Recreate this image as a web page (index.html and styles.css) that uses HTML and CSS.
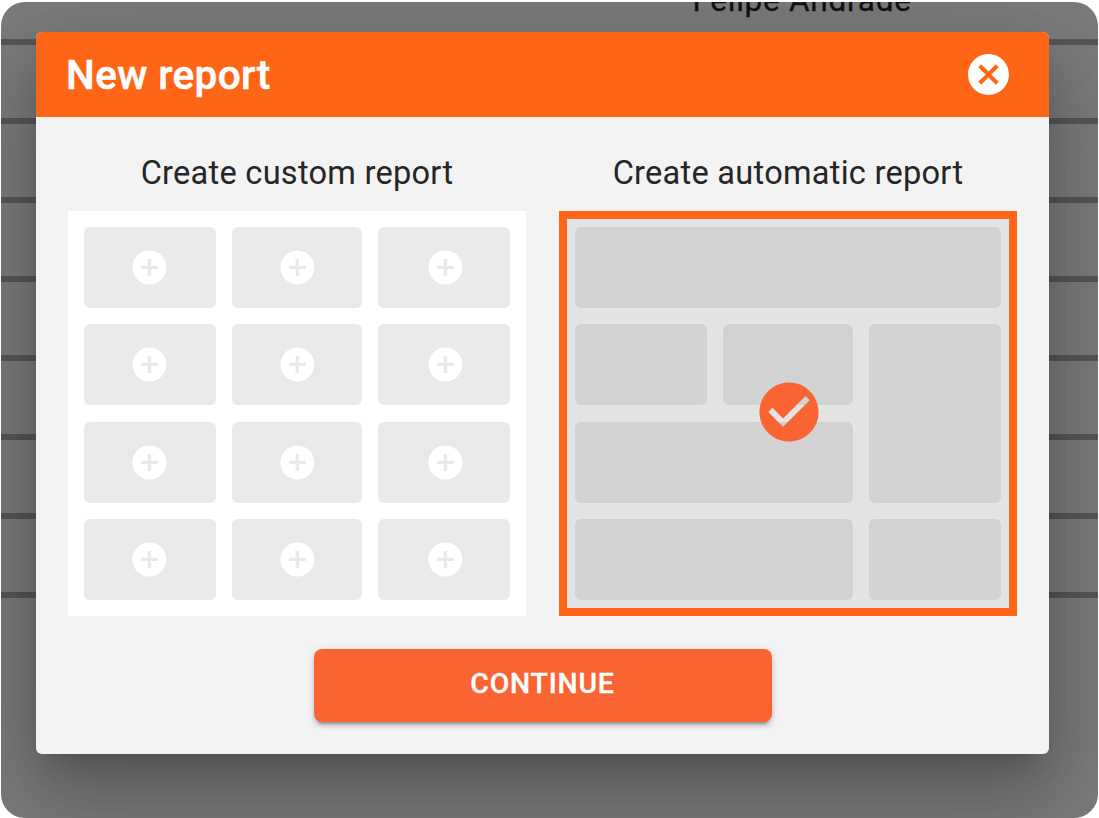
FILE: index.html
```html
<!DOCTYPE html>
<html lang="en">
<head>
<meta charset="utf-8">
<title>New report</title>
<link rel="stylesheet" href="styles.css">
</head>
<body>
<svg width="0" height="0" class="defs" aria-hidden="true">
  <symbol id="add" viewBox="0 0 24 24"><path d="M12 2C6.48 2 2 6.48 2 12s4.48 10 10 10 10-4.48 10-10S17.52 2 12 2zm5 11h-4v4h-2v-4H7v-2h4V7h2v4h4v2z"/></symbol>
</svg>
<div class="stage">
  <div class="backdrop-list">
    <div class="list-row list-row-first"><span class="person">Felipe Andrade</span></div>
    <div class="list-row"></div>
    <div class="list-row"></div>
    <div class="list-row"></div>
    <div class="list-row"></div>
    <div class="list-row"></div>
    <div class="list-row"></div>
    <div class="list-row"></div>
  </div>
  <section class="dialog" role="dialog" aria-labelledby="title">
    <header class="dialog-header">
      <h1 class="dialog-title" id="title">New report</h1>
      <button class="close" aria-label="Close"><svg class="close-icon" viewBox="0 0 24 24"><path d="M12 2C6.47 2 2 6.47 2 12s4.47 10 10 10 10-4.47 10-10S17.53 2 12 2zm5 13.59L15.59 17 12 13.41 8.41 17 7 15.59 10.59 12 7 8.41 8.41 7 12 10.59 15.59 7 17 8.41 13.41 12 17 15.59z"/></svg></button>
    </header>
    <div class="dialog-body">
      <div class="options">
        <div class="option">
          <h2 class="option-title">Create custom report</h2>
          <div class="preview preview-custom">
            <div class="cell cell-start"><svg class="add-icon"><use href="#add"/></svg></div>
            <div class="cell"><svg class="add-icon"><use href="#add"/></svg></div>
            <div class="cell cell-end"><svg class="add-icon"><use href="#add"/></svg></div>
            <div class="cell cell-start"><svg class="add-icon"><use href="#add"/></svg></div>
            <div class="cell"><svg class="add-icon"><use href="#add"/></svg></div>
            <div class="cell cell-end"><svg class="add-icon"><use href="#add"/></svg></div>
            <div class="cell cell-start"><svg class="add-icon"><use href="#add"/></svg></div>
            <div class="cell"><svg class="add-icon"><use href="#add"/></svg></div>
            <div class="cell cell-end"><svg class="add-icon"><use href="#add"/></svg></div>
            <div class="cell cell-start"><svg class="add-icon"><use href="#add"/></svg></div>
            <div class="cell"><svg class="add-icon"><use href="#add"/></svg></div>
            <div class="cell cell-end"><svg class="add-icon"><use href="#add"/></svg></div>
          </div>
        </div>
        <div class="option">
          <h2 class="option-title">Create automatic report</h2>
          <div class="preview preview-auto">
            <div class="cell cell-full"></div>
            <div class="cell"></div>
            <div class="cell"></div>
            <div class="cell cell-tall"></div>
            <div class="cell cell-wide"></div>
            <div class="cell cell-wide"></div>
            <div class="cell"></div>
            <svg class="selected-icon" viewBox="0 0 24 24"><path d="M12 2C6.48 2 2 6.48 2 12s4.48 10 10 10 10-4.48 10-10S17.52 2 12 2zm-2 15l-5-5 1.41-1.41L10 14.17l7.59-7.59L19 8l-9 9z"/></svg>
          </div>
        </div>
      </div>
      <button class="continue">CONTINUE</button>
    </div>
  </section>
</div>
</body>
</html>
```

FILE: styles.css
```css
* {
  box-sizing: border-box;
}

body {
  margin: 0;
  padding: 2px 1px 0;
  height: 818px;
  overflow: hidden;
  background: #fff;
  font-family: Roboto, "Liberation Sans", sans-serif;
}

.defs {
  position: absolute;
}

.stage {
  display: grid;
  height: 816px;
  overflow: hidden;
  border-radius: 24px;
  background: #7b7b7b;
}

.backdrop-list,
.dialog {
  grid-area: 1 / 1;
}

.list-row {
  height: 79.15px;
  border-bottom: 6px solid #565656;
}

.list-row-first {
  display: flex;
  align-items: flex-start;
  height: 42.5px;
  padding-left: 691.5px;
}

.person {
  margin-top: -19px;
  font-size: 31.5px;
  line-height: 36px;
  letter-spacing: 0.75px;
  color: #111;
  -webkit-text-stroke: 0.3px #111;
}

.dialog {
  align-self: start;
  margin: 30px 49px 0 35px;
  height: 721.5px;
  border-radius: 6px;
  background: #f3f3f3;
  box-shadow:
    0 22px 30px -14px rgba(0, 0, 0, 0.2),
    0 49px 77px 6px rgba(0, 0, 0, 0.14),
    0 18px 93px 16px rgba(0, 0, 0, 0.12);
}

.dialog-header {
  display: flex;
  align-items: center;
  justify-content: space-between;
  height: 85.4px;
  padding: 0 36px 0 30px;
  border-radius: 6px 6px 0 0;
  background: #ff6517;
}

.dialog-title {
  margin: 0;
  font-size: 40.6px;
  font-weight: 500;
  letter-spacing: 0.35px;
  color: #fff;
  -webkit-text-stroke: 0.5px #fff;
}

.close {
  display: flex;
  padding: 0;
  border: 0;
  background: none;
}

.close-icon {
  width: 49px;
  height: 49px;
  fill: #fff;
}

.dialog-body {
  display: flex;
  flex-direction: column;
  align-items: center;
  padding: 31.6px 32px 0;
}

.options {
  display: flex;
  justify-content: space-between;
  width: 949px;
}

.option {
  width: 458px;
}

.option-title {
  margin: 0;
  height: 62px;
  font-size: 32.6px;
  font-weight: 400;
  line-height: 49px;
  letter-spacing: 0.25px;
  text-align: center;
  color: #262626;
}

.preview {
  display: grid;
  grid-template-columns: 132px 130px 132px;
  grid-template-rows: repeat(4, 81px);
  gap: 16.35px 16px;
  height: 405px;
}

.cell {
  display: flex;
  align-items: center;
  justify-content: center;
  border-radius: 6px;
  background: #e9e9e9;
}

.cell-start {
  padding-right: 1.5px;
}

.cell-end {
  padding-left: 2px;
}

.preview-custom {
  padding: 16px;
  background: #fff;
}

.add-icon {
  width: 40.8px;
  height: 40.8px;
  fill: #fff;
}

.preview-auto {
  position: relative;
  padding: 8px;
  border: 8px solid #ff6517;
  background: #e4e4e4;
}

.preview-auto .cell {
  background: #d2d2d2;
}

.preview .cell-full {
  grid-column: 1 / 4;
}

.preview .cell-wide {
  grid-column: span 2;
}

.preview .cell-tall {
  grid-row: span 2;
}

/* Selection mark floats over the middle of the preview. */
.selected-icon {
  position: absolute;
  top: calc(50% - 1px);
  left: calc(50% + 0.5px);
  width: 71px;
  height: 71px;
  transform: translate(-50%, -50%);
  fill: #fa6432;
}

.continue {
  margin-top: 32.6px;
  width: 458px;
  height: 73px;
  padding: 0 0 4px;
  border: 0;
  border-radius: 8px;
  background: #fa6432;
  box-shadow:
    0 6px 2px -4px rgba(0, 0, 0, 0.2),
    0 4px 4px rgba(0, 0, 0, 0.14),
    0 2px 10px rgba(0, 0, 0, 0.12);
  font-family: inherit;
  font-size: 28.4px;
  font-weight: 500;
  letter-spacing: 0.8px;
  color: #fff;
  -webkit-text-stroke: 0.3px #fff;
}
```
